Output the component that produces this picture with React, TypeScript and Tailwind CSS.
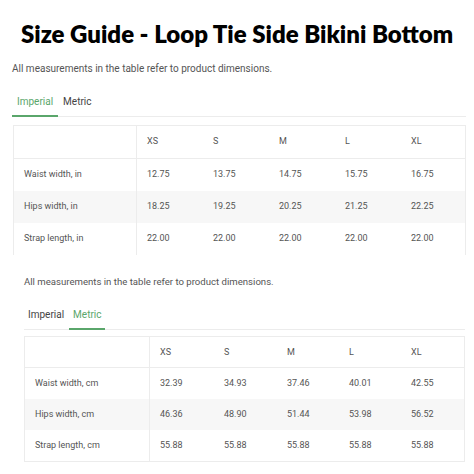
import React from "react";

type Row = { label: string; values: string[] };

const sizes = ["XS", "S", "M", "L", "XL"];

const imperialRows: Row[] = [
    { label: "Waist width, in", values: ["12.75", "13.75", "14.75", "15.75", "16.75"] },
    { label: "Hips width, in", values: ["18.25", "19.25", "20.25", "21.25", "22.25"] },
    { label: "Strap length, in", values: ["22.00", "22.00", "22.00", "22.00", "22.00"] },
];

const metricRows: Row[] = [
    { label: "Waist width, cm", values: ["32.39", "34.93", "37.46", "40.01", "42.55"] },
    { label: "Hips width, cm", values: ["46.36", "48.90", "51.44", "53.98", "56.52"] },
    { label: "Strap length, cm", values: ["55.88", "55.88", "55.88", "55.88", "55.88"] },
];

function Tabs({ active }: { active: "imperial" | "metric" }) {
    return (
        <div className="flex border-b border-[#ececec] text-[10px]">
            <div
                className={
                    active === "imperial"
                        ? "px-[5px] pb-[6px] border-b-2 border-[#5aa66b] -mb-px text-[#5aa66b]"
                        : "px-[4px] pb-[6px] text-[#444]"
                }
            >
                Imperial
            </div>
            <div
                className={
                    active === "metric"
                        ? "ml-[1px] px-[4px] pb-[6px] border-b-2 border-[#5aa66b] -mb-px text-[#5aa66b]"
                        : "px-[5px] pb-[6px] text-[#444]"
                }
            >
                Metric
            </div>
        </div>
    );
}

function SizeTable({
    rows,
    cols,
    headH,
    rowH,
    bottom,
}: {
    rows: Row[];
    cols: string;
    headH: string;
    rowH: string;
    bottom: boolean;
}) {
    return (
        <div
            className={
                "border-x border-t border-[#ececec] text-[9px] text-[#555] " +
                (bottom ? "border-b" : "")
            }
        >
            <div className={"grid items-center border-b border-[#ececec] " + cols + " " + headH}>
                <div className="h-full border-r border-[#ececec]" />
                {sizes.map((s) => (
                    <div key={s} className="pl-[10px]">
                        {s}
                    </div>
                ))}
            </div>
            {rows.map((r, i) => (
                <div
                    key={r.label}
                    className={
                        "grid items-center " + cols + " " + rowH + " " + (i === 1 ? "bg-[#f7f7f7]" : "")
                    }
                >
                    <div className="h-full flex items-center pl-[10px] border-r border-[#ececec]">
                        {r.label}
                    </div>
                    {r.values.map((v, j) => (
                        <div key={j} className="pl-[10px]">
                            {v}
                        </div>
                    ))}
                </div>
            ))}
        </div>
    );
}

export default function App() {
    return (
        <div
            className="w-[474px] h-[474px] bg-white overflow-hidden"
            style={{ fontFamily: "Roboto, 'Liberation Sans', sans-serif" }}
        >
            <h1
                className="pt-[17px] text-center text-[24px] font-extrabold leading-[34px] text-black"
                style={{ fontFamily: "Lato, sans-serif" }}
            >
                Size Guide - Loop Tie Side Bikini Bottom
            </h1>

            <div className="pl-[12px] pr-[8px]">
                <p className="mt-[10px] text-[10px] text-[#555]">
                    All measurements in the table refer to product dimensions.
                </p>
                <div className="mt-[18px]">
                    <Tabs active="imperial" />
                </div>
                <div className="mt-[8px] pl-px">
                    <SizeTable
                        rows={imperialRows}
                        cols="grid-cols-[123px_66px_66px_66px_66px_1fr]"
                        headH="h-[33px]"
                        rowH="h-[32px]"
                        bottom={false}
                    />
                </div>
            </div>

            <div className="pl-[24px] pr-[9px]">
                <p className="mt-[20px] text-[9.6px] text-[#555]">
                    All measurements in the table refer to product dimensions.
                </p>
                <div className="mt-[18px]">
                    <Tabs active="metric" />
                </div>
                <div className="mt-[6px]">
                    <SizeTable
                        rows={metricRows}
                        cols="grid-cols-[125px_64px_63px_62px_62px_1fr]"
                        headH="h-[31px]"
                        rowH="h-[31px]"
                        bottom={true}
                    />
                </div>
            </div>
        </div>
    );
}
